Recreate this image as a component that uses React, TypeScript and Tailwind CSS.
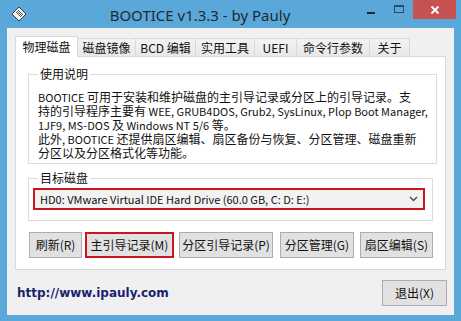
const ui = "font-['Noto_Sans_CJK_SC','Liberation_Sans',sans-serif]";

const tabs = ["物理磁盘", "磁盘镜像", "BCD 编辑", "实用工具", "UEFI", "命令行参数", "关于"];
const tabWidths = ["w-[63px]", "w-[58px]", "w-[60px]", "w-[59px]", "w-[42px]", "w-[73px]", "w-[40px]"];

const intro = [
  "BOOTICE 可用于安装和维护磁盘的主引导记录或分区上的引导记录。支",
  "持的引导程序主要有 WEE, GRUB4DOS, Grub2, SysLinux, Plop Boot Manager,",
  "1JF9, MS-DOS 及 Windows NT 5/6 等。",
  "此外, BOOTICE 还提供扇区编辑、扇区备份与恢复、分区管理、磁盘重新",
  "分区以及分区格式化等功能。",
];

// latin runs a bit smaller so they keep the narrow look of the original UI font
function Mixed({ text }: { text: string }) {
  const parts = text.split(/([\x20-\x7e]+)/).filter(Boolean);
  return (
    <>
      {parts.map((p, i) =>
        /^[\x20-\x7e]+$/.test(p) ? (
          <span key={i} className="text-[11px] whitespace-pre">
            {p}
          </span>
        ) : (
          <span key={i}>{p}</span>
        )
      )}
    </>
  );
}

function AppIcon() {
  return (
    <svg width="16" height="16" viewBox="0 0 16 16">
      <path d="M8 1 L15 8 L8 15 L1 8 Z" fill="#f4f4f4" stroke="#3a3a3a" strokeWidth="1" />
      <path d="M5 6 L10 11 M6 5 L11 10 M7 4 L12 9" stroke="#555" strokeWidth="1" />
    </svg>
  );
}

function Button({ label, className }: { label: string; className: string }) {
  return (
    <div
      className={`h-[26px] flex items-center justify-center bg-[#e1e1e1] border border-[#adadad] text-[12px] leading-none text-[#111] ${className}`}
    >
      {label}
    </div>
  );
}

export default function App() {
  return (
    <div className={`w-[461px] h-[321px] bg-[#5aa8d9] flex flex-col ${ui}`}>
      {/* title bar */}
      <div className="h-[28px] flex items-start relative">
        <div className="pl-[11px] pt-[6px]">
          <AppIcon />
        </div>
        <div className="flex-1 text-center pt-[4px] text-[15px] text-[#1e2a36] pl-[16px] font-['Noto_Sans',sans-serif]">
          BOOTICE v1.3.3 - by Pauly
        </div>
        <div className="flex items-start">
          <div className="w-[28px] h-[19px] flex items-center justify-center">
            <div className="w-[8px] h-[2px] bg-[#1c2733] mt-[6px]" />
          </div>
          <div className="w-[28px] h-[19px] flex items-center justify-center">
            <div className="w-[10px] h-[8px] border border-[#2c4a66] border-t-2 -mt-[1px]" />
          </div>
          <div className="w-[43px] h-[19px] bg-[#c75050] flex items-center justify-center mr-[5px]">
            <svg width="10" height="10" viewBox="0 0 10 10">
              <path d="M1.5 1.5 L8.5 8.5 M8.5 1.5 L1.5 8.5" stroke="#fff" strokeWidth="1.8" />
            </svg>
          </div>
        </div>
      </div>

      {/* client */}
      <div className="ml-[7px] mr-[7px] mb-[6px] flex-1 bg-[#f0f0f0] flex flex-col px-[8px] pt-[8px]">
        <div className="flex items-end h-[20px]">
          {tabs.map((t, i) =>
            i === 0 ? (
              <div
                key={t}
                className={`${tabWidths[i]} h-[21px] -mb-px relative bg-white border border-b-0 border-[#d9d9d9] flex items-center justify-center text-[12px] text-[#111]`}
              >
                {t}
              </div>
            ) : (
              <div
                key={t}
                className={`${tabWidths[i]} h-[18px] border border-l-0 border-[#d9d9d9] border-b-0 flex items-center justify-center text-[12px] text-[#111] bg-gradient-to-b from-[#f3f3f3] to-[#e8e8e8]`}
              >
                {t}
              </div>
            )
          )}
        </div>

        <div className="h-[214px] bg-white border border-[#d9d9d9] px-[12px] flex flex-col">
          <fieldset className="mt-[9px] border border-[#dcdcdc] pl-[9px] pr-[8px] pb-[4px]">
            <legend className="px-[2px] text-[12px] leading-[16px] text-[#111]">使用说明</legend>
            <div className="pt-[8px] text-[12px] leading-[13px] text-[#111]">
              {intro.map((l) => (
                <div key={l} className="whitespace-nowrap">
                  <Mixed text={l} />
                </div>
              ))}
            </div>
          </fieldset>

          <fieldset className="mt-[6px] border border-[#dcdcdc] pl-[4px] pr-[7px] pb-[10px]">
            <legend className="ml-[5px] px-[2px] text-[12px] leading-[16px] text-[#111]">目标磁盘</legend>
            <div className="mt-[2px] h-[22px] border-2 border-[#c8181e] bg-[#f2f2f2] flex items-center pl-[5px] pr-[5px] text-[11px] text-[#111]">
              <span className="flex-1 whitespace-nowrap">HD0: VMware Virtual IDE Hard Drive (60.0 GB, C: D: E:)</span>
              <svg width="9" height="6" viewBox="0 0 9 6">
                <path d="M1 1 L4.5 4.5 L8 1" stroke="#444" strokeWidth="1.3" fill="none" />
              </svg>
            </div>
          </fieldset>

          <div className="flex mt-[11px] ml-[1px]">
            <Button label="刷新(R)" className="w-[53px]" />
            <Button label="主引导记录(M)" className="w-[89px] ml-[3px] border-2 border-[#c8181e]" />
            <Button label="分区引导记录(P)" className="w-[94px] ml-[5px]" />
            <Button label="分区管理(G)" className="w-[74px] ml-[7px]" />
            <Button label="扇区编辑(S)" className="w-[73px] ml-[6px]" />
          </div>
        </div>

        <div className="flex items-center flex-1">
          <span className="flex-1 pl-[2px] text-[12px] font-bold text-[#1b1f6e] font-['DejaVu_Sans',sans-serif]">
            http://www.ipauly.com
          </span>
          <Button label="退出(X)" className="w-[65px] h-[25px] -mr-[1px]" />
        </div>
      </div>
    </div>
  );
}
